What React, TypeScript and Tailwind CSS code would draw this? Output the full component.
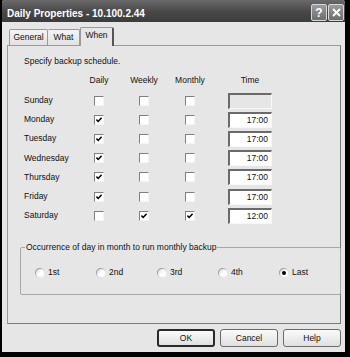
import { JSX } from "react";

const font = "font-['Liberation_Sans',Arial,sans-serif]";

const rows = [
  { day: "Sunday", d: false, w: false, m: false, time: "" },
  { day: "Monday", d: true, w: false, m: false, time: "17:00" },
  { day: "Tuesday", d: true, w: false, m: false, time: "17:00" },
  { day: "Wednesday", d: true, w: false, m: false, time: "17:00" },
  { day: "Thursday", d: true, w: false, m: false, time: "17:00" },
  { day: "Friday", d: true, w: false, m: false, time: "17:00" },
  { day: "Saturday", d: false, w: true, m: true, time: "12:00" },
];

const occurrences = ["1st", "2nd", "3rd", "4th", "Last"];

function Check({ on }: { on: boolean }) {
  return (
    <div className="w-[10px] h-[10px] bg-white border-t border-l border-t-[#808080] border-l-[#808080] border-b border-r border-b-[#f4f4f4] border-r-[#f4f4f4] flex items-center justify-center">
      {on && (
        <svg width="6" height="6" viewBox="0 0 7 7">
          <path d="M0.5 3 L2.5 5.2 L6.5 1" stroke="#000" strokeWidth="1.7" fill="none" />
        </svg>
      )}
    </div>
  );
}

function Radio({ on }: { on: boolean }) {
  return (
    <div className="w-[10px] h-[10px] rounded-full bg-gradient-to-br from-[#6e6e6e] via-[#d0d0d0] to-white p-[1px]">
      <div className="w-full h-full rounded-full bg-gradient-to-br from-[#d4d4d4] via-white to-white flex items-center justify-center">
        {on && <div className="w-[4px] h-[4px] rounded-full bg-black" />}
      </div>
    </div>
  );
}

function Cell({ children, w }: { children: JSX.Element; w: string }) {
  return <div className={`${w} flex justify-center`}>{children}</div>;
}

export default function App() {
  return (
    <div className={`w-[350px] h-[357px] bg-black ${font} text-[8.5px] leading-[11px] text-[#111]`}>
      <div className="ml-[2px] w-[343px] h-[352px] bg-[#e6e6e6] flex flex-col rounded-t-[3px] overflow-hidden">
        {/* title bar */}
        <div className="h-[22px] shrink-0 bg-gradient-to-b from-[#6a6a6a] via-[#4a4a4a] to-[#3c3c3c] flex items-start justify-between">
          <div className="pl-[5px] pt-[8px] text-white font-bold text-[10px] leading-[12px]">
            Daily Properties - 10.100.2.44
          </div>
          <div className="flex gap-[1px] pt-[4px] pr-[1px]">
            <div className="w-[16px] h-[17px] rounded-[2px] border border-[#d8d8d8] bg-gradient-to-b from-[#9c9c9c] to-[#6e6e6e] flex items-center justify-center text-white font-bold text-[12px] leading-none">
              ?
            </div>
            <div className="w-[16px] h-[17px] rounded-[2px] border border-[#d8d8d8] bg-gradient-to-b from-[#9c9c9c] to-[#6e6e6e] flex items-center justify-center">
              <svg width="9" height="9" viewBox="0 0 9 9">
                <path d="M1 1 L8 8 M8 1 L1 8" stroke="#fff" strokeWidth="1.8" />
              </svg>
            </div>
          </div>
        </div>

        {/* tabs */}
        <div className="mt-[5px] h-[18px] flex items-end pl-[7px] relative z-10">
          <div className="h-[16px] w-[39px] border border-b-0 border-[#9a9a9a] rounded-t-[2px] flex items-center justify-center bg-gradient-to-b from-[#f4f4f4] to-[#e2e2e2]">
            General
          </div>
          <div className="h-[16px] w-[32px] border border-b-0 border-l-0 border-[#9a9a9a] rounded-t-[2px] flex items-center justify-center bg-gradient-to-b from-[#f4f4f4] to-[#e2e2e2]">
            What
          </div>
          <div className="h-[19px] w-[34px] -mb-[1px] border border-b-0 border-[#9a9a9a] border-r-[#555] border-r-2 rounded-t-[2px] flex items-start pt-[2px] justify-center bg-[#e6e6e6]">
            When
          </div>
        </div>

        {/* panel */}
        <div className="ml-[5px] w-[334px] h-[279px] shrink-0 border border-[#9a9a9a] border-r-[#7a7a7a] border-b-[#7a7a7a] flex flex-col pl-[16px]">
          <div className="mt-[10px] h-[11px]">Specify backup schedule.</div>

          <div className="mt-[7px] h-[12px] flex items-center">
            <div className="w-[55px]" />
            <div className="w-[40px] text-center">Daily</div>
            <div className="w-[50px] text-center">Weekly</div>
            <div className="w-[42px] text-center">Monthly</div>
            <div className="w-[61px] flex justify-end">
              <div className="w-[44px] text-center">Time</div>
            </div>
          </div>

          <div className="mt-[5px] flex flex-col">
            {rows.map((r) => (
              <div key={r.day} className="h-[19.2px] flex items-center">
                <div className="w-[55px]">{r.day}</div>
                <Cell w="w-[40px]">
                  <Check on={r.d} />
                </Cell>
                <Cell w="w-[50px]">
                  <Check on={r.w} />
                </Cell>
                <Cell w="w-[42px]">
                  <Check on={r.m} />
                </Cell>
                <div className="w-[61px] flex justify-end">
                  <div
                    className={`w-[44px] h-[16px] border-t-2 border-l-2 border-t-[#6a6a6a] border-l-[#6a6a6a] border-b border-r border-b-[#f8f8f8] border-r-[#f8f8f8] text-right pr-[3px] leading-[13px] ${
                      r.time ? "bg-white" : "bg-[#e6e6e6]"
                    }`}>
                    {r.time}
                  </div>
                </div>
              </div>
            ))}
          </div>

          <fieldset className="-ml-[4px] mt-[17px] w-[302px] h-[53px] border border-[#a8a8a8] rounded-[2px]">
            <legend className="ml-[4px] px-[1px]">
              Occurrence of day in month to run monthly backup
            </legend>
            <div className="mt-[14px] pl-[14px] flex">
              {occurrences.map((o) => (
                <div key={o} className="w-[61px] flex items-center gap-[3px]">
                  <Radio on={o === "Last"} />
                  <span>{o}</span>
                </div>
              ))}
            </div>
          </fieldset>
        </div>

        {/* buttons */}
        <div className="mt-[5px] flex justify-end gap-[5px] pr-[4px]">
          <button className="w-[58px] h-[18px] rounded-[3px] border-2 border-[#2a2a2a] bg-gradient-to-b from-[#fafafa] to-[#e0e0e0] leading-none">
            OK
          </button>
          <button className="w-[58px] h-[18px] rounded-[3px] border border-[#6a6a6a] bg-gradient-to-b from-[#fafafa] to-[#e0e0e0] leading-none">
            Cancel
          </button>
          <button className="w-[58px] h-[18px] rounded-[3px] border border-[#6a6a6a] bg-gradient-to-b from-[#fafafa] to-[#e0e0e0] leading-none">
            Help
          </button>
        </div>
      </div>
    </div>
  );
}
